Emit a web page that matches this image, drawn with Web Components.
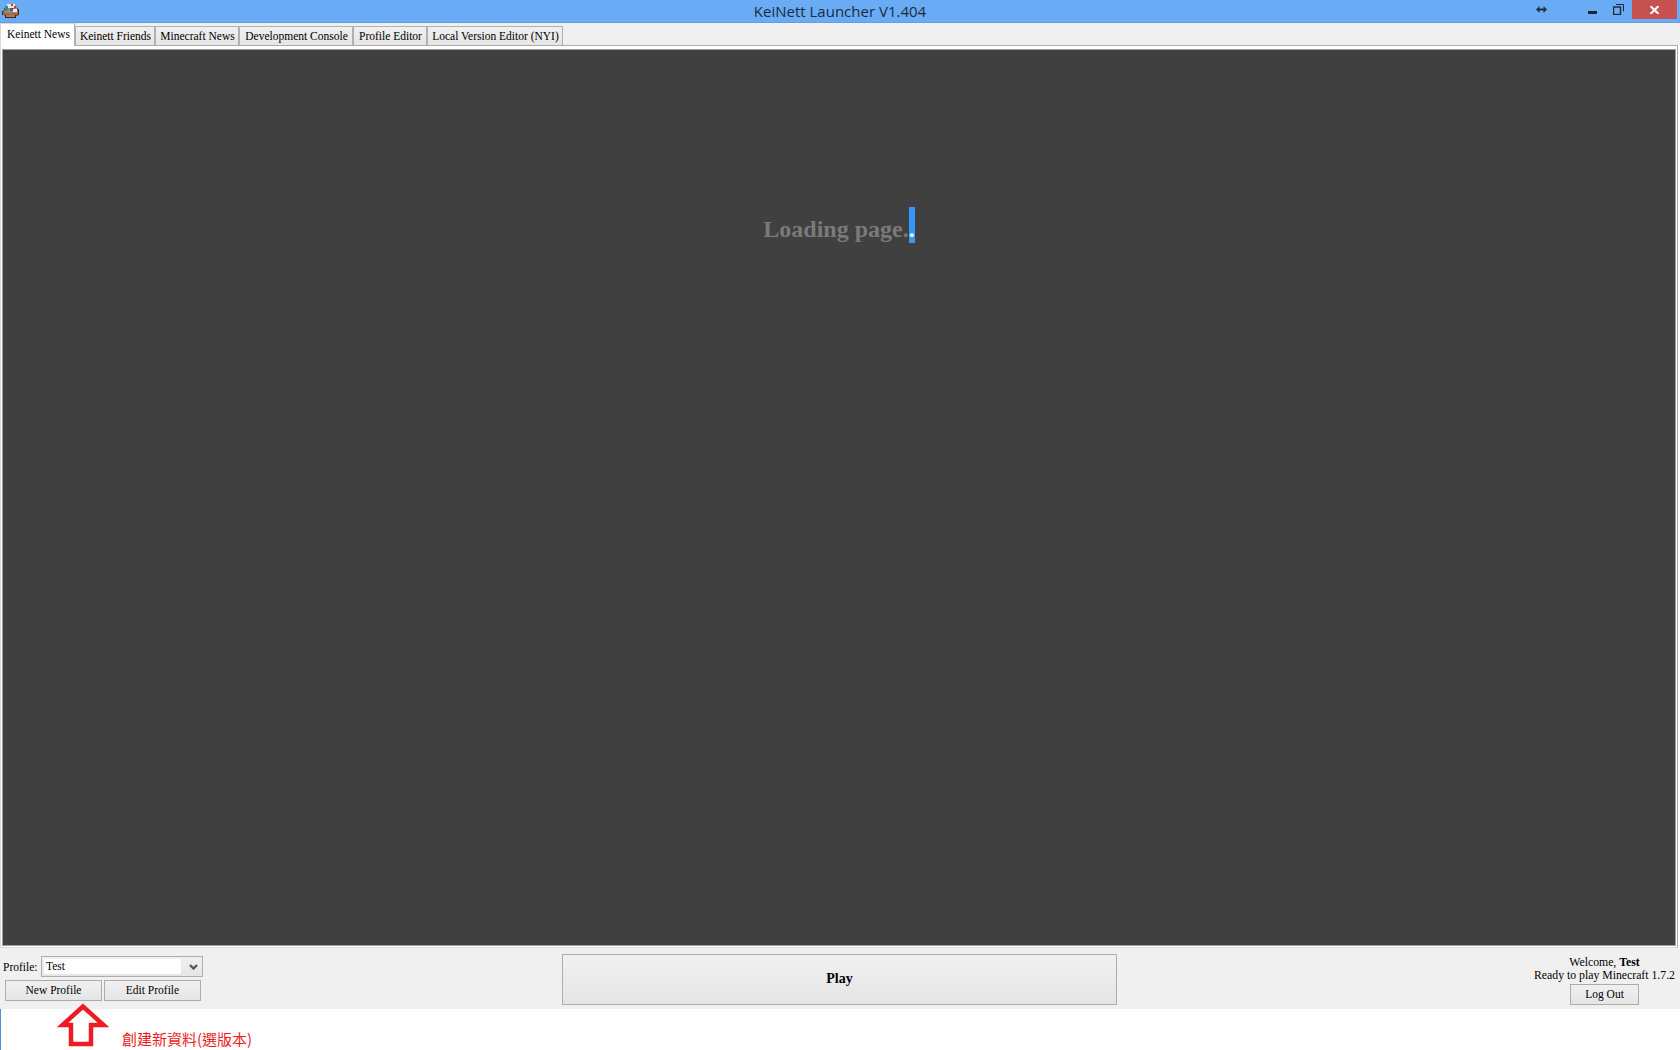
<!DOCTYPE html>
<html lang="en">
<head>
<meta charset="utf-8">
<title>KeiNett Launcher</title>
<style>
  html, body { margin: 0; height: 100%; background: #fff; overflow: hidden; }
  body { font: 11.5px "Liberation Serif", "Noto Sans CJK TC", serif; color: #000; }
</style>
</head>
<body>
<launcher-window>
  <title-bar slot="title" caption="KeiNett Launcher V1.404"></title-bar>
  <tab-strip slot="tabs">
    <tab-item active>Keinett News</tab-item>
    <tab-item style="--w:80px">Keinett Friends</tab-item>
    <tab-item style="--w:84px">Minecraft News</tab-item>
    <tab-item style="--w:114px">Development Console</tab-item>
    <tab-item style="--w:74px">Profile Editor</tab-item>
    <tab-item style="--w:136px">Local Version Editor (NYI)</tab-item>
  </tab-strip>
  <news-panel slot="panel"></news-panel>
  <launcher-footer slot="footer">
    <profile-picker slot="left" value="Test"></profile-picker>
    <flat-button slot="center" style="--h:51px;font-weight:bold;font-size:14px">Play</flat-button>
    <user-info slot="right" name="Test" version="1.7.2"></user-info>
  </launcher-footer>
  <note-strip slot="note">創建新資料(選版本)</note-strip>
</launcher-window>

<script>
// small helper, every element below just declares its html
const define = (name, html, init) => {
  customElements.define(name, class extends HTMLElement {
    constructor() {
      super();
      this.attachShadow({ mode: "open" }).innerHTML = html;
    }
    connectedCallback() {
      if (init) init(this, this.shadowRoot);
    }
  });
};

define("launcher-window", `
  <style>
    :host { display: flex; flex-direction: column; height: 1050px; }
  </style>
  <slot name="title"></slot>
  <slot name="tabs"></slot>
  <slot name="panel"></slot>
  <slot name="footer"></slot>
  <slot name="note"></slot>
`);

define("title-bar", `
  <style>
    :host {
      display: grid;
      grid-template-columns: 1fr auto 1fr;
      align-items: start;
      height: 22px;
      background: #6aabf6;
      border-bottom: 1px solid #5f9ee2;
      flex: none;
    }
    .icon { display: block; margin: 3px 0 0 2px; }
    .caption {
      font: 15px/23px "Open Sans", sans-serif;
      color: #1c2b3c;
    }
    .controls { display: flex; justify-content: flex-end; padding-right: 3px; }
    .ctl { display: flex; align-items: center; justify-content: center; height: 19px; }
    .close { width: 45px; background: #c75050; }
    svg { display: block; }
  </style>
  <svg class="icon" width="17" height="16" viewBox="0 0 17 16" shape-rendering="crispEdges">
    <rect x="2" y="5" width="14" height="8" fill="#7a4a2c"/>
    <rect x="1" y="7" width="15" height="5" fill="#a9653a"/>
    <rect x="3" y="12" width="11" height="3" fill="#3a2a20"/>
    <rect x="4" y="12" width="9" height="2" fill="#b97448"/>
    <rect x="3" y="3" width="12" height="7" fill="#8d8d8d"/>
    <rect x="5" y="1" width="8" height="4" fill="#e8e4e0"/>
    <rect x="3" y="3" width="3" height="5" fill="#2f8f98"/>
    <rect x="9" y="1" width="2" height="2" fill="#d83030"/>
    <rect x="12" y="3" width="2" height="2" fill="#d83030"/>
    <rect x="8" y="5" width="4" height="3" fill="#5c5c5c"/>
    <rect x="11" y="6" width="4" height="3" fill="#f0ecec"/>
    <rect x="0" y="8" width="1" height="4" fill="#3a2a20"/>
    <rect x="16" y="6" width="1" height="6" fill="#3a2a20"/>
  </svg>
  <div class="caption"></div>
  <div class="controls">
    <div class="ctl" style="width:11px;margin-right:41px">
      <svg width="11" height="7" viewBox="0 0 11 7" fill="#22303e"><path d="M0 3.500 3.500 0v2.500h4V0L11 3.500 7.500 7V4.500h-4V7z"/></svg>
    </div>
    <div class="ctl" style="width:9px;margin-right:16px">
      <svg width="9" height="3" style="margin-top:6px"><rect width="9" height="3" fill="#1c2733"/></svg>
    </div>
    <div class="ctl" style="width:11px;margin-right:8px">
      <svg width="11" height="11" viewBox="0 0 11 11" fill="none" stroke="#1c2733" style="margin-top:-1px">
        <rect x=".5" y="3" width="7" height="7.500" stroke-width="1.400"/>
        <path d="M3 .5h7.500v7"/>
      </svg>
    </div>
    <div class="ctl close">
      <svg width="9" height="8" viewBox="0 0 9 8" stroke="#fff" stroke-width="2"><path d="M.5 0 8.500 8M8.500 0 .5 8"/></svg>
    </div>
  </div>
`, (el, root) => {
  root.querySelector(".caption").textContent = el.getAttribute("caption");
});

define("tab-strip", `
  <style>
    :host {
      display: flex;
      align-items: flex-end;
      height: 22px;
      flex: none;
      background: #f0f0f0;
      position: relative;
      z-index: 1;
    }
  </style>
  <slot></slot>
`);

define("tab-item", `
  <style>
    :host {
      display: flex;
      align-items: center;
      justify-content: center;
      box-sizing: border-box;
      width: var(--w, 75px);
      height: 19px;
      padding-left: 1px;
      border: 1px solid #b0b0b0;
      border-bottom-width: 0;
      background: linear-gradient(#f0f0f0, #e5e5e5);
      white-space: nowrap;
    }
    :host([active]) {
      height: 23px;
      margin-bottom: -1px;
      padding-bottom: 2px;
      padding-left: 2px;
      background: #fff;
      border-color: #d9d9d9 #b0b0b0 #fff #d9d9d9;
    }
  </style>
  <slot></slot>
`);

define("news-panel", `
  <style>
    :host {
      display: flex;
      flex: 1;
      min-height: 0;
      box-sizing: border-box;
      margin-right: 2px;
      padding: 3px 1px 1px;
      background: #fff;
      border: 1px solid #acacac;
      border-left-color: #dcdcdc;
      border-bottom-color: #dcdcdc;
    }
    .web {
      flex: 1;
      box-sizing: border-box;
      border: 1px solid #a0a0a0;
      background: #404040;
      padding-top: 157px;
      text-align: center;
      color: #7a7a7a;
      font: bold 24px/44px "Liberation Serif", serif;
    }
    .sel {
      display: inline-block;
      height: 36px;
      background: #3399ff;
      color: #fff;
      vertical-align: top;
    }
  </style>
  <div class="web">Loading page.<span class="sel">.</span></div>
`);

define("launcher-footer", `
  <style>
    :host {
      display: grid;
      grid-template-columns: 562px 555px 1fr;
      height: 61px;
      flex: none;
      background: #f0f0f0;
    }
    .center { padding-top: 6px; }
    .right { display: flex; justify-content: flex-end; padding-right: 5px; }
  </style>
  <div><slot name="left"></slot></div>
  <div class="center"><slot name="center"></slot></div>
  <div class="right"><slot name="right"></slot></div>
`);

define("flat-button", `
  <style>
    :host {
      display: flex;
      align-items: center;
      justify-content: center;
      box-sizing: border-box;
      height: var(--h, 21px);
      width: var(--w, auto);
      padding-bottom: 2px;
      border: 1px solid #acacac;
      background: linear-gradient(#f0f0f0, #e5e5e5);
    }
  </style>
  <slot></slot>
`);

define("profile-picker", `
  <style>
    :host { display: block; padding: 8px 0 0 3px; }
    .row { display: flex; align-items: center; height: 21px; }
    .label { width: 38px; }
    .select {
      display: flex;
      box-sizing: border-box;
      width: 162px;
      height: 21px;
      padding: 2px;
      border: 1px solid #acacac;
      background: linear-gradient(#f0f0f0, #e5e5e5);
    }
    .value { flex: 1; background: #fff; padding-left: 2px; line-height: 15px; }
    .arrow { width: 19px; display: flex; align-items: center; justify-content: center; padding-left: 6px; box-sizing: border-box; }
    .btns { display: flex; gap: 2px; margin: 3px 0 0 2px; }
    svg { display: block; }
  </style>
  <div class="row">
    <span class="label">Profile:</span>
    <div class="select">
      <div class="value"></div>
      <div class="arrow">
        <svg width="9" height="6" viewBox="0 0 9 6" fill="none" stroke="#555" stroke-width="2.400"><path d="M1 1l3.500 3.500L8 1"/></svg>
      </div>
    </div>
  </div>
  <div class="btns">
    <flat-button style="--w:97px">New Profile</flat-button>
    <flat-button style="--w:97px">Edit Profile</flat-button>
  </div>
`, (el, root) => {
  root.querySelector(".value").textContent = el.getAttribute("value");
});

define("user-info", `
  <style>
    :host { display: block; width: 141px; text-align: center; padding-top: 8px; font-size: 11.75px; }
    .line { line-height: 13px; white-space: nowrap; }
    .logout { display: flex; justify-content: center; margin-top: 2px; font-size: 11.5px; }
  </style>
  <div class="line">Welcome, <b class="who"></b></div>
  <div class="line">Ready to play Minecraft <span class="ver"></span></div>
  <div class="logout"><flat-button style="--w:69px">Log Out</flat-button></div>
`, (el, root) => {
  root.querySelector(".who").textContent = el.getAttribute("name");
  root.querySelector(".ver").textContent = el.getAttribute("version");
});

define("note-strip", `
  <style>
    :host {
      display: block;
      flex: none;
      height: 41px;
      box-sizing: border-box;
      position: relative;
      background: #fff;
      border-left: 1px solid #4f8fd8;
      padding: 20px 0 0 121px;
      font: 15px/20px "Noto Sans CJK TC", "Liberation Sans", sans-serif;
      color: #ed1c24;
    }
    svg { position: absolute; left: 56px; top: -7px; }
  </style>
  <svg width="54" height="48" viewBox="0 0 54 48" fill="none" stroke="#ed1c24" stroke-width="4.500">
    <path d="M26 4.500 5.500 23H14V42H34V23H46.500z" stroke-linejoin="miter"/>
  </svg>
  <slot></slot>
`);
</script>
</body>
</html>
